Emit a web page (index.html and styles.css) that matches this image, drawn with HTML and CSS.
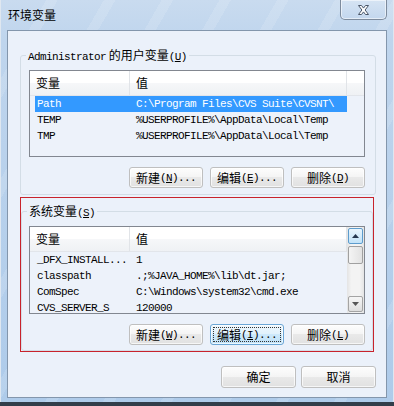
FILE: index.html
```html
<!DOCTYPE html>
<html lang="zh-CN">
<head>
    <meta charset="UTF-8">
    <title>环境变量</title>
    <link rel="stylesheet" href="styles.css">
</head>
<body>

    <div class="window">

        <div class="titlebar">
            <span class="title">环境变量</span>
            <div class="closeBtn">
                <svg width="15" height="12" viewBox="0 0 15 12">
                    <path d="M2.5 1.5h3l2 2.6 2-2.6h3l-3.4 4.5 3.4 4.5h-3l-2-2.6-2 2.6h-3l3.4-4.5z" fill="#fff" stroke="#4a5668" stroke-width="1" stroke-linejoin="round"/>
                </svg>
            </div>
        </div>

        <div class="client">

            <div class="group userGroup">
                <div class="legend"><span class="en">Administrator</span> 的用户变量<span class="en">(<u>U</u>)</span></div>

                <div class="listview userList">
                    <div class="lvHeader">
                        <div class="hcol hcol1">变量</div>
                        <div class="hcol hcol2">值</div>
                        <div class="hcol hcol3"></div>
                    </div>
                    <div class="row selected"><span class="c1">Path</span><span class="c2">C:\Program Files\CVS Suite\CVSNT\</span></div>
                    <div class="row"><span class="c1">TEMP</span><span class="c2">%USERPROFILE%\AppData\Local\Temp</span></div>
                    <div class="row"><span class="c1">TMP</span><span class="c2">%USERPROFILE%\AppData\Local\Temp</span></div>
                </div>

                <div class="buttons">
                    <button class="btn">新建<span class="en">(<u>N</u>)...</span></button>
                    <button class="btn">编辑<span class="en">(<u>E</u>)...</span></button>
                    <button class="btn">删除<span class="en">(<u>D</u>)</span></button>
                </div>
            </div>

            <div class="redbox">
                <div class="group sysGroup">
                    <div class="legend">系统变量<span class="en">(<u>S</u>)</span></div>

                    <div class="listview sysList">
                        <div class="lvMain">
                            <div class="lvHeader">
                                <div class="hcol hcol1">变量</div>
                                <div class="hcol hcol2">值</div>
                            </div>
                            <div class="row"><span class="c1">_DFX_INSTALL...</span><span class="c2">1</span></div>
                            <div class="row"><span class="c1">classpath</span><span class="c2">.;%JAVA_HOME%\lib\dt.jar;</span></div>
                            <div class="row"><span class="c1">ComSpec</span><span class="c2">C:\Windows\system32\cmd.exe</span></div>
                            <div class="row"><span class="c1">CVS_SERVER_S</span><span class="c2">120000</span></div>
                        </div>
                        <div class="scrollbar">
                            <div class="sbUp">
                                <svg width="7" height="4" viewBox="0 0 7 4"><path d="M0 4L3.5 0L7 4z" fill="#25364e"/></svg>
                            </div>
                            <div class="sbThumb"></div>
                            <div class="sbSpace"></div>
                            <div class="sbDown">
                                <svg width="7" height="4" viewBox="0 0 7 4"><path d="M0 0L3.5 4L7 0z" fill="#555"/></svg>
                            </div>
                        </div>
                    </div>

                    <div class="buttons sysButtons">
                        <button class="btn">新建<span class="en">(<u>W</u>)...</span></button>
                        <button class="btn focused"><span class="focusRect">编辑<span class="en">(<u>I</u>)...</span></span></button>
                        <button class="btn">删除<span class="en">(<u>L</u>)</span></button>
                    </div>
                </div>
            </div>

            <div class="dialogButtons">
                <button class="btn btnLarge">确定</button>
                <button class="btn btnLarge">取消</button>
            </div>

        </div>
    </div>

</body>
</html>
```

FILE: styles.css
```css
*{
    margin: 0;
    padding: 0;
    box-sizing: border-box;
}

html, body{
    width: 394px;
    height: 406px;
    overflow: hidden;
}

body{
    background: #2c3744;
    font-family: "Noto Sans CJK SC", sans-serif;
    font-size: 12px;
    color: #000;
}

.en{
    font-family: "Liberation Mono", monospace;
    font-size: 11px;
    letter-spacing: -0.6px;
}

.window{
    width: 394px;
    height: 406px;
    display: flex;
    flex-direction: column;
    padding: 0 7px 4px 7px;
    border-bottom: 4px solid #323d4a;
    background:
        repeating-linear-gradient(120deg, rgba(255,255,255,0) 0 40px, rgba(255,255,255,0.13) 40px 50px),
        linear-gradient(180deg, #c9dbef 0, #bfd5ed 40px, #aecbea 100%);
    box-shadow: inset 1px 0 #dfe7f0, inset -1px 0 #dfe7f0;
}

/* title bar */

.titlebar{
    height: 30px;
    margin: 0 -7px;
    padding: 0 7px 0 8px;
    display: flex;
    justify-content: space-between;
    align-items: flex-start;
}

.title{
    padding-top: 6px;
    line-height: 18px;
    font-size: 12px;
}

.closeBtn{
    width: 47px;
    height: 20px;
    border: 1px solid #7d8b9d;
    border-top: 0;
    border-radius: 0 0 5px 5px;
    background: linear-gradient(#d6e4f3, #c3d7ee);
    box-shadow: inset 0 0 0 1px rgba(255,255,255,0.55);
    display: flex;
    align-items: center;
    justify-content: center;
}

/* client area */

.client{
    flex: 1;
    border: 1px solid #8396ac;
    background: #ebf1fa;
    display: flex;
    flex-direction: column;
}

.group{
    border: 1px solid #d3dde6;
    border-radius: 3px;
    display: flex;
    flex-direction: column;
}

.userGroup{
    width: 356px;
    height: 140px;
    margin: 24px 0 0 12px;
}

.legend{
    align-self: flex-start;
    margin: -8px 0 0 5px;
    padding: 0 2px;
    line-height: 14px;
    background: #ebf1fa;
    white-space: nowrap;
}

.redbox{
    width: 354px;
    height: 155px;
    margin: 2px 0 0 12px;
    padding-top: 13px;
    border: 1px solid #c8232c;
}

.sysGroup{
    width: 352px;
    height: 140px;
}

/* list views */

.listview{
    width: 336px;
    margin: 6px 0 0 8px;
    border: 1px solid #828790;
    background: #edf2fa;
    overflow: hidden;
}

.userList{
    height: 87px;
}

.sysList{
    height: 88px;
    margin-left: 7px;
    display: flex;
}

.lvMain{
    flex: 1;
    overflow: hidden;
}

.lvHeader{
    display: flex;
    height: 25px;
    border-bottom: 1px solid #e2e5ea;
    background: linear-gradient(#ffffff 0, #ffffff 50%, #f6f7f9 50%, #eff1f4 100%);
}

.hcol{
    padding-left: 6px;
    line-height: 24px;
    border-right: 1px solid #e1e4e8;
}

.hcol1{
    width: 100px;
}

.hcol2{
    width: 217px;
}

.hcol3{
    flex: 1;
    border-right: 0;
}

.row{
    display: flex;
    width: 312px;
    height: 16px;
    margin-left: 5px;
    padding-left: 2px;
    line-height: 16px;
    font-family: "Liberation Mono", monospace;
    font-size: 11px;
    letter-spacing: -0.6px;
    white-space: nowrap;
    overflow: hidden;
}

.c1{
    width: 99px;
    flex-shrink: 0;
}

.selected{
    background: #3399ff;
    color: #fff;
}

/* scrollbar */

.scrollbar{
    width: 17px;
    padding: 1px;
    display: flex;
    flex-direction: column;
    background: linear-gradient(90deg, #e4e4e4, #f3f3f3 25%, #f3f3f3 75%, #e4e4e4);
}

.sbUp, .sbDown{
    height: 16px;
    border-radius: 2px;
    display: flex;
    align-items: center;
    justify-content: center;
}

.sbUp{
    border: 1px solid #5d9ccd;
    background: linear-gradient(#e9f5fd, #c3e3f8);
}

.sbDown{
    border: 1px solid #a4a4a4;
    background: linear-gradient(#f6f6f6, #dedede);
}

.sbThumb{
    height: 18px;
    margin-top: 2px;
    border: 1px solid #a0a0a0;
    border-radius: 2px;
    background: linear-gradient(90deg, #f4f4f4, #e2e2e2);
}

.sbSpace{
    flex: 1;
}

/* buttons */

.buttons{
    display: flex;
    justify-content: flex-end;
    gap: 7px;
    margin: 10px 10px 0 0;
}

.sysButtons{
    margin-right: 7px;
}

.btn{
    width: 74px;
    height: 21px;
    border: 1px solid #bfbfbf;
    border-radius: 3px;
    background: linear-gradient(#fdfdfd, #f4f4f4 50%, #e9e9e9 50%, #e1e1e1);
    box-shadow: inset 0 0 0 1px rgba(255,255,255,0.7);
    font-family: "Noto Sans CJK SC", sans-serif;
    font-size: 12px;
    line-height: 14px;
    color: #000;
    display: flex;
    align-items: center;
    justify-content: center;
    white-space: nowrap;
}

.focused{
    border-color: #6aa6d6;
    background: linear-gradient(#eef7fd, #e0f1fc 50%, #cde9fb 50%, #bfe1f7);
    padding: 2px;
}

.focusRect{
    flex: 1;
    align-self: stretch;
    border: 1px dotted #333;
    display: flex;
    align-items: center;
    justify-content: center;
}

.dialogButtons{
    display: flex;
    justify-content: flex-end;
    gap: 5px;
    margin: 14px 10px 0 0;
}

.btnLarge{
    width: 75px;
    height: 22px;
}
```
